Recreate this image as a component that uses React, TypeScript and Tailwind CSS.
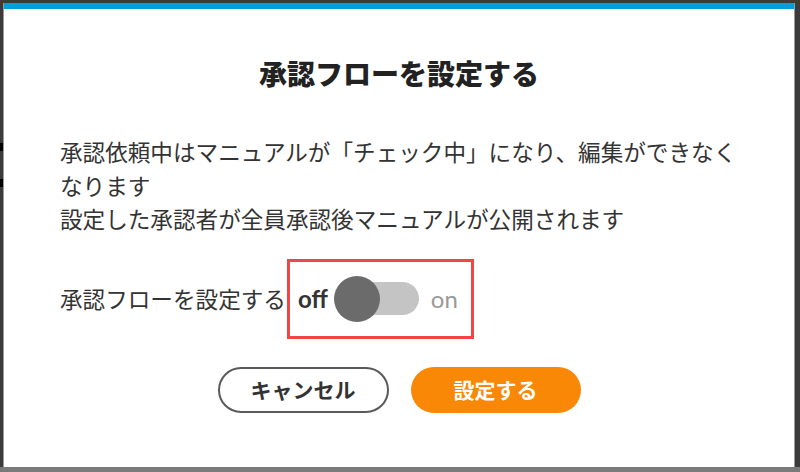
import React from 'react';

export default function App() {
  return (
    <div className="w-[800px] h-[472px] bg-[#3b3b3b] flex flex-col overflow-hidden font-['Lato','Noto_Sans_CJK_JP',sans-serif]">
      <div className="flex flex-1 pt-[3px]">
        <div className="w-[3px] flex flex-col pt-[140px] gap-[28px]">
          <div className="h-[8px] w-[3px] bg-black" />
          <div className="h-[8px] w-[3px] bg-black" />
        </div>
        <div className="w-[792px] bg-white border-l border-r border-[#9a9a9a] flex flex-col">
          <div className="h-[6px] bg-[#029fdb]" />
          <h2 className="pt-[44px] text-center text-[28px] leading-[40px] font-black text-[#222] font-['Noto_Sans_CJK_JP',sans-serif]">
            承認フローを設定する
          </h2>
          <p className="mt-[42px] px-[56px] text-[22.6px] leading-[33.5px] text-[#333] whitespace-nowrap font-['Noto_Sans_CJK_JP',sans-serif]">
            承認依頼中はマニュアルが「チェック中」になり、編集ができなく
            <br />
            なります
            <br />
            設定した承認者が全員承認後マニュアルが公開されます
          </p>
          <div className="mt-[23px] px-[56px] flex items-center">
            <span className="text-[22.6px] leading-[34px] text-[#333] font-['Noto_Sans_CJK_JP',sans-serif]">承認フローを設定する</span>
            <div className="ml-[1px] h-[80px] w-[187px] border-[3px] border-[#f24545] flex items-center pl-[8px]">
              <span className="text-[24px] font-bold text-[#333] font-['Lato',sans-serif]">off</span>
              <div className="relative ml-[6px] w-[85px] h-[46px]">
                <div className="absolute left-[6px] top-[6px] w-[79px] h-[33px] rounded-full bg-[#c4c4c4]" />
                <div className="absolute left-0 top-0 w-[46px] h-[46px] rounded-full bg-[#6b6b6b]" />
              </div>
              <span className="ml-[12px] text-[24px] text-[#999] font-['Lato',sans-serif]">on</span>
            </div>
          </div>
          <div className="mt-[28px] flex justify-center gap-[22px]">
            <button className="w-[171px] h-[46px] rounded-full border-2 border-[#5a5a5a] bg-white text-[21px] font-bold text-[#333] font-['Noto_Sans_CJK_JP',sans-serif]">
              キャンセル
            </button>
            <button className="w-[170px] h-[46px] rounded-full bg-[#f98806] text-[21px] font-bold text-white font-['Noto_Sans_CJK_JP',sans-serif]">
              設定する
            </button>
          </div>
        </div>
      </div>
      <div className="h-[5px] bg-[#7a7a7a]" />
    </div>
  );
}
